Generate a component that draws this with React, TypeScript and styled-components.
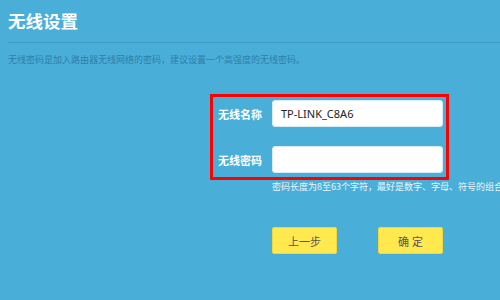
import React from "react";
import styled, { createGlobalStyle } from "styled-components";

const Global = createGlobalStyle`
  html, body { margin: 0; padding: 0; }
  body {
    width: 500px;
    height: 300px;
    overflow: hidden;
    background: #4aafd8;
    font-family: "Noto Sans CJK SC", "Noto Sans", sans-serif;
  }
`;

const Page = styled.div`
  width: 500px;
  height: 300px;
  box-sizing: border-box;
  padding-left: 8px;
  overflow: hidden;
`;

const Title = styled.h1`
  margin: 0;
  height: 43px;
  box-sizing: border-box;
  padding-top: 8px;
  font-size: 17.5px;
  line-height: 26px;
  font-weight: 700;
  color: #ffffff;
  border-bottom: 1px solid #3d98c2;
`;

const Desc = styled.p`
  margin: 0;
  padding-top: 10px;
  height: 14px;
  font-size: 9px;
  line-height: 14px;
  color: #2e7eaa;
  white-space: nowrap;
`;

const FormBox = styled.div`
  margin-top: 27px;
  margin-left: 202px;
  width: 239px;
  box-sizing: border-box;
  border: 3px solid #ff0000;
  padding: 3px 3px 4px 5px;
  display: flex;
  flex-direction: column;
  gap: 19px;
`;

const Row = styled.div`
  display: flex;
  align-items: center;
`;

const Label = styled.span`
  width: 54px;
  font-size: 11px;
  font-weight: 700;
  color: #ffffff;
  white-space: nowrap;
`;

const Input = styled.div`
  width: 171px;
  height: 27px;
  box-sizing: border-box;
  background: #ffffff;
  border: 1px solid #d8ecf5;
  border-radius: 3px;
  padding-left: 8px;
  display: flex;
  align-items: center;
  font-family: "Noto Sans", "Noto Sans CJK SC", sans-serif;
  font-size: 11px;
  color: #222222;
`;

const Hint = styled.div`
  margin-left: 264px;
  margin-top: 1px;
  font-size: 9px;
  line-height: 12px;
  color: #eaf6fb;
  white-space: nowrap;
`;

const Buttons = styled.div`
  margin-left: 264px;
  margin-top: 34px;
  display: flex;
  gap: 41px;
`;

const Button = styled.button<{ $spaced?: boolean }>`
  width: 65px;
  height: 27px;
  box-sizing: border-box;
  background: #ffe94f;
  border: 1px solid #f2d63c;
  border-radius: 2px;
  font-family: "Noto Sans CJK SC", sans-serif;
  font-size: 11px;
  color: #555555;
  padding: 0;
  letter-spacing: ${(p) => (p.$spaced ? "3px" : "0")};
  text-indent: ${(p) => (p.$spaced ? "3px" : "0")};
`;

export default function App() {
  return (
    <>
      <Global />
      <Page>
        <Title>无线设置</Title>
        <Desc>无线密码是加入路由器无线网络的密码，建议设置一个高强度的无线密码。</Desc>
        <FormBox>
          <Row>
            <Label>无线名称</Label>
            <Input>TP-LINK_C8A6</Input>
          </Row>
          <Row>
            <Label>无线密码</Label>
            <Input />
          </Row>
        </FormBox>
        <Hint>密码长度为8至63个字符，最好是数字、字母、符号的组合</Hint>
        <Buttons>
          <Button>上一步</Button>
          <Button $spaced>确定</Button>
        </Buttons>
      </Page>
    </>
  );
}
